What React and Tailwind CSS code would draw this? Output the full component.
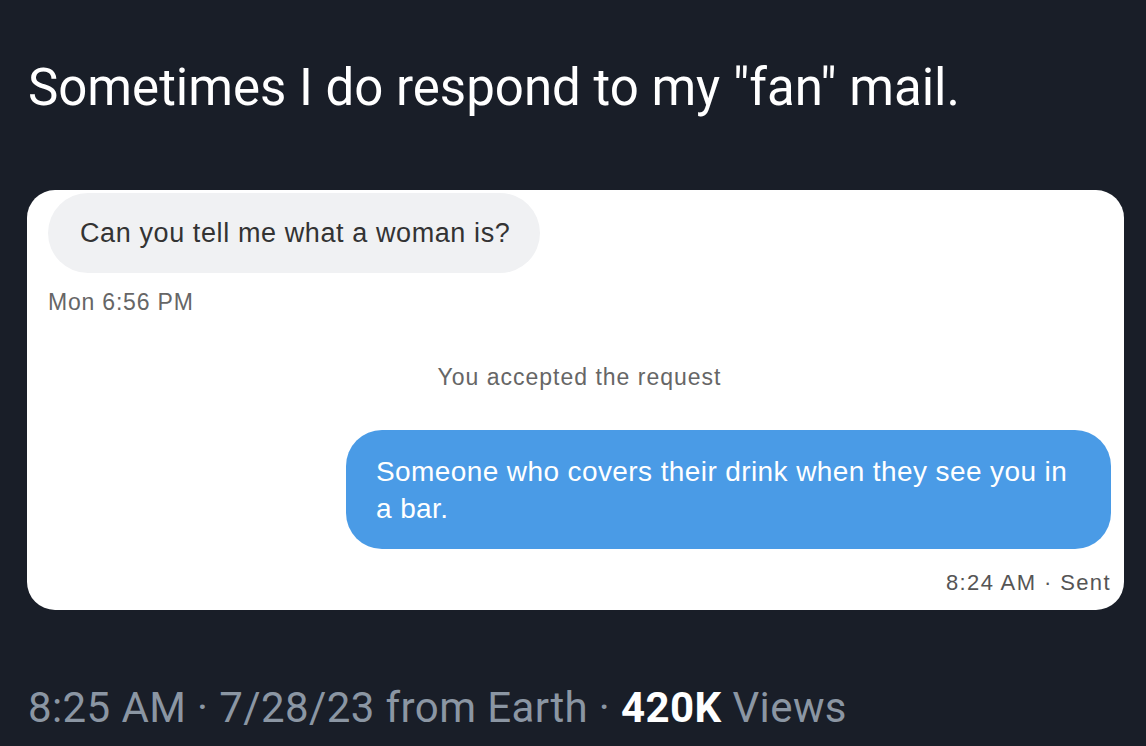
import React from 'react'

export default function App() {
    return (
        <div className="w-[1146px] h-[746px] bg-[#191e28] overflow-hidden flex flex-col" style={{ fontFamily: 'Roboto, "Liberation Sans", sans-serif' }}>

            <div className="pl-[28px] pt-[58px] text-white text-[51px] leading-[60px]">
                Sometimes I do respond to my "fan" mail.
            </div>

            <div className="mt-[72px] ml-[27px] w-[1097px] h-[420px] bg-white rounded-[28px] flex flex-col pl-[21px] pr-[13px] pt-[3px]" style={{ fontFamily: '"Liberation Sans", Arial, sans-serif' }}>

                <div className="self-start w-[492px] h-[80px] bg-[#f0f1f3] rounded-[40px] flex items-center pl-[32px] text-[27px] text-[#333] tracking-[0.6px]">
                    Can you tell me what a woman is?
                </div>

                <div className="mt-[16px] text-[23px] leading-[26px] text-[#666] tracking-[0.8px]">Mon 6:56 PM</div>

                <div className="mt-[48px] text-center text-[23px] leading-[28px] text-[#666] tracking-[1px]">You accepted the request</div>

                <div className="mt-[39px] self-end w-[765px] h-[119px] bg-[#4a9be6] rounded-[36px] pl-[30px] pr-[30px] pt-[23px] text-white text-[28px] leading-[37px] tracking-[0.4px]">
                    Someone who covers their drink when they see you in a bar.
                </div>

                <div className="mt-[21px] self-end text-[22px] leading-[26px] text-[#555] tracking-[1.4px]">8:24 AM · Sent</div>
            </div>

            <div className="pl-[28px] mt-[73px] text-[42px] leading-[50px] text-[#8b96a3] tracking-[0.4px]">
                8:25 AM · 7/28/23 from Earth · <span className="text-white font-bold">420K</span> Views
            </div>

        </div>
    )
}
